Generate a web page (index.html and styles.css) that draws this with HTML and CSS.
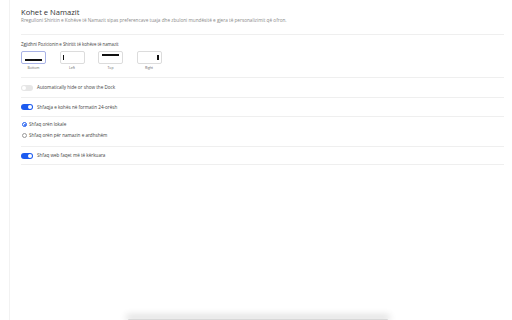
FILE: index.html
```html
<!DOCTYPE html>
<html lang="sq">
<head>
    <meta charset="UTF-8">
    <meta name="viewport" content="width=device-width, initial-scale=1.0">
    <title>Kohet e Namazit</title>
    <link rel="stylesheet" href="styles.css">
</head>
<body>
    <div class="layout">
        <div class="sidebar"></div>
        <div class="main">
            <div class="header">
                <h1 class="title">Kohet e Namazit</h1>
                <p class="subtitle">Rregulloni Shiritin e Kohëve të Namazit sipas preferencave tuaja dhe zbuloni mundësitë e gjera të personalizimit që ofron.</p>
            </div>

            <div class="section position">
                <div class="label">Zgjidhni Pozicionin e Shiritit të kohëve të namazit</div>
                <div class="options">
                    <div class="option">
                        <div class="box selected"><span class="bar bar-bottom"></span></div>
                        <span class="opt-label">Bottom</span>
                    </div>
                    <div class="option">
                        <div class="box"><span class="bar bar-left"></span></div>
                        <span class="opt-label">Left</span>
                    </div>
                    <div class="option">
                        <div class="box"><span class="bar bar-top"></span></div>
                        <span class="opt-label">Top</span>
                    </div>
                    <div class="option">
                        <div class="box"><span class="bar bar-right"></span></div>
                        <span class="opt-label">Right</span>
                    </div>
                </div>
            </div>

            <div class="section row row-a">
                <span class="toggle"></span>
                <span class="text">Automatically hide or show the Dock</span>
            </div>

            <div class="section row row-b">
                <span class="toggle on"></span>
                <span class="text">Shfaqja e kohës në formatin 24-orësh</span>
            </div>

            <div class="section radios">
                <div class="radio-row">
                    <span class="radio checked"></span>
                    <span class="text">Shfaq orën lokale</span>
                </div>
                <div class="radio-row">
                    <span class="radio"></span>
                    <span class="text">Shfaq orën për namazin e ardhshëm</span>
                </div>
            </div>

            <div class="section row row-c">
                <span class="toggle on"></span>
                <span class="text">Shfaq web faqet më të kërkuara</span>
            </div>
        </div>
    </div>
    <div class="dock"></div>
</body>
</html>
```

FILE: styles.css
```css
body {
    margin: 0;
    font-family: "Open Sans", "Liberation Sans", sans-serif;
    color: #333;
    background-color: #fff;
    height: 320px;
    overflow: hidden;
    position: relative;
}

.layout {
    display: flex;
    height: 320px;
}

.sidebar {
    width: 9px;
    border-right: 1px solid #f2f2f2;
    flex-shrink: 0;
}

.main {
    flex: 1;
    padding: 0 8px 0 11px;
}

.header {
    height: 35px;
    border-bottom: 1px solid #efefef;
    padding-top: 8px;
    box-sizing: border-box;
}

.title {
    margin: 0;
    font-size: 7.6px;
    font-weight: 400;
    line-height: 9px;
    color: #333;
}

.subtitle {
    margin: 1px 0 0;
    font-size: 4.7px;
    line-height: 5px;
    color: #8a8a8a;
}

.section {
    border-bottom: 1px solid #efefef;
    box-sizing: border-box;
}

.position {
    height: 43px;
    padding-top: 7px;
}

.label {
    font-size: 4.4px;
    letter-spacing: -0.05px;
    line-height: 5px;
    color: #444;
}

.options {
    display: flex;
    gap: 13.5px;
    margin-top: 4px;
}

.option {
    display: flex;
    flex-direction: column;
    align-items: center;
}

.box {
    width: 23px;
    height: 11px;
    border: 1px solid #dcdcdc;
    border-radius: 2px;
    position: relative;
}

.box.selected {
    border-color: #a9b3e6;
}

.bar {
    position: absolute;
    background-color: #111;
}

.bar-bottom {
    left: 3px;
    right: 3px;
    bottom: 2px;
    height: 1.6px;
}

.bar-top {
    left: 3px;
    right: 3px;
    top: 2px;
    height: 1.6px;
}

.bar-left {
    left: 2px;
    top: 3px;
    bottom: 3px;
    width: 1.6px;
}

.bar-right {
    right: 2px;
    top: 3px;
    bottom: 3px;
    width: 1.6px;
}

.opt-label {
    font-size: 3.4px;
    line-height: 4px;
    margin-top: 2px;
    color: #666;
}

.row {
    display: flex;
    align-items: center;
    gap: 4px;
}

.row-a {
    height: 20px;
}

.row-b {
    height: 19px;
}

.row-c {
    height: 18px;
}

.text {
    font-size: 4.6px;
    line-height: 5px;
    color: #444;
}

.toggle {
    width: 12px;
    height: 6px;
    border-radius: 3px;
    background-color: #e6e6e6;
    position: relative;
    flex-shrink: 0;
}

.toggle::after {
    content: "";
    position: absolute;
    top: 1px;
    left: 1px;
    width: 4px;
    height: 4px;
    border-radius: 50%;
    background-color: #fff;
}

.toggle.on {
    background-color: #1c5bf0;
}

.toggle.on::after {
    left: 7px;
}

.radios {
    height: 30px;
    padding-top: 5px;
    display: flex;
    flex-direction: column;
    gap: 6px;
}

.radio-row {
    display: flex;
    align-items: center;
    gap: 2px;
    padding-left: 1px;
}

.radio {
    width: 5px;
    height: 5px;
    border: 0.6px solid #999;
    border-radius: 50%;
    box-sizing: border-box;
    position: relative;
    flex-shrink: 0;
}

.radio.checked {
    border-color: #1c5bf0;
}

.radio.checked::after {
    content: "";
    position: absolute;
    top: 0.8px;
    left: 0.8px;
    width: 2.2px;
    height: 2.2px;
    border-radius: 50%;
    background-color: #1c5bf0;
}

.dock {
    position: absolute;
    left: 128px;
    top: 319px;
    width: 260px;
    height: 1px;
    border-radius: 6px 6px 0 0;
    background-color: #d8d8d8;
    box-shadow: 0 -2px 7px 2px rgba(0, 0, 0, 0.16);
}
```
